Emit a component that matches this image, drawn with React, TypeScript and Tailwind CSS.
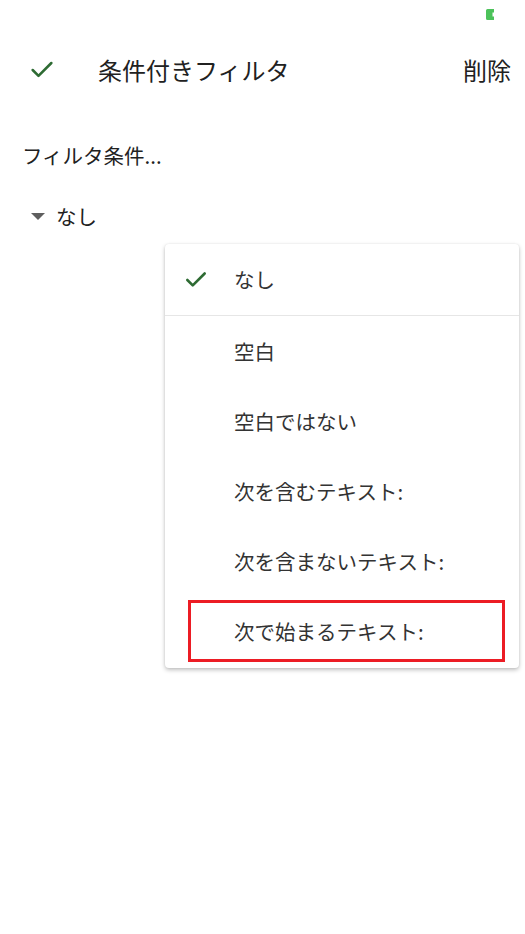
import { Check } from "lucide-react";

const font = { fontFamily: '"Noto Sans CJK JP", "Noto Sans", sans-serif' };

const items = ["空白", "空白ではない", "次を含むテキスト:", "次を含まないテキスト:", "次で始まるテキスト:"];

export default function App() {
  return (
    <div className="w-[525px] h-[934px] bg-white text-[#212121]" style={font}>
      <div className="h-[28px] flex justify-end pr-[30px] pt-[9px]">
        <svg width="9" height="11" viewBox="0 0 9 11">
          <path d="M1.5 0H8v3.5H6.5v4H8V11H1.5A1.5 1.5 0 0 1 0 9.5v-8A1.5 1.5 0 0 1 1.5 0Z" fill="#4cc25a" />
        </svg>
      </div>
      <div className="h-[84px] flex items-center pl-[28px] pr-[14px]">
        <Check className="w-[28px] h-[28px] text-[#2e6b33]" strokeWidth={2.2} />
        <div className="ml-[42px] text-[24px] text-[#212121]">条件付きフィルタ</div>
        <div className="ml-auto text-[24px] text-[#212121]">削除</div>
      </div>
      <div className="pl-[22px] h-[86px] flex items-center text-[20.5px] text-[#212121]">フィルタ条件...</div>
      <div className="pl-[31px] h-[36px] flex items-center text-[20.5px] text-[#212121]">
        <svg width="14" height="7" viewBox="0 0 14 7" className="mr-[11px]">
          <path d="M0 0h14L7 7Z" fill="#5f5f5f" />
        </svg>
        なし
      </div>
      <div className="flex justify-end pr-[6px] mt-[10px]">
        <div className="relative w-[354px] bg-white rounded-[4px] shadow-[0_2px_4px_rgba(0,0,0,0.25),0_0_2px_rgba(0,0,0,0.08)] pb-[2px]">
          <div className="h-[72px] flex items-center border-b border-[#e6e6e6]">
            <Check className="ml-[18px] w-[26px] h-[26px] text-[#2e6b33]" strokeWidth={2.4} />
            <span className="ml-[25px] text-[20.5px] text-[#333]">なし</span>
          </div>
          {items.map((t) => (
            <div key={t} className="h-[70px] flex items-center pl-[69px] text-[20.5px] text-[#333]">
              {t}
            </div>
          ))}
          <div className="absolute left-[23px] top-[356px] w-[317px] h-[62px] border-[3px] border-[#ec1c24]" />
        </div>
      </div>
    </div>
  );
}
